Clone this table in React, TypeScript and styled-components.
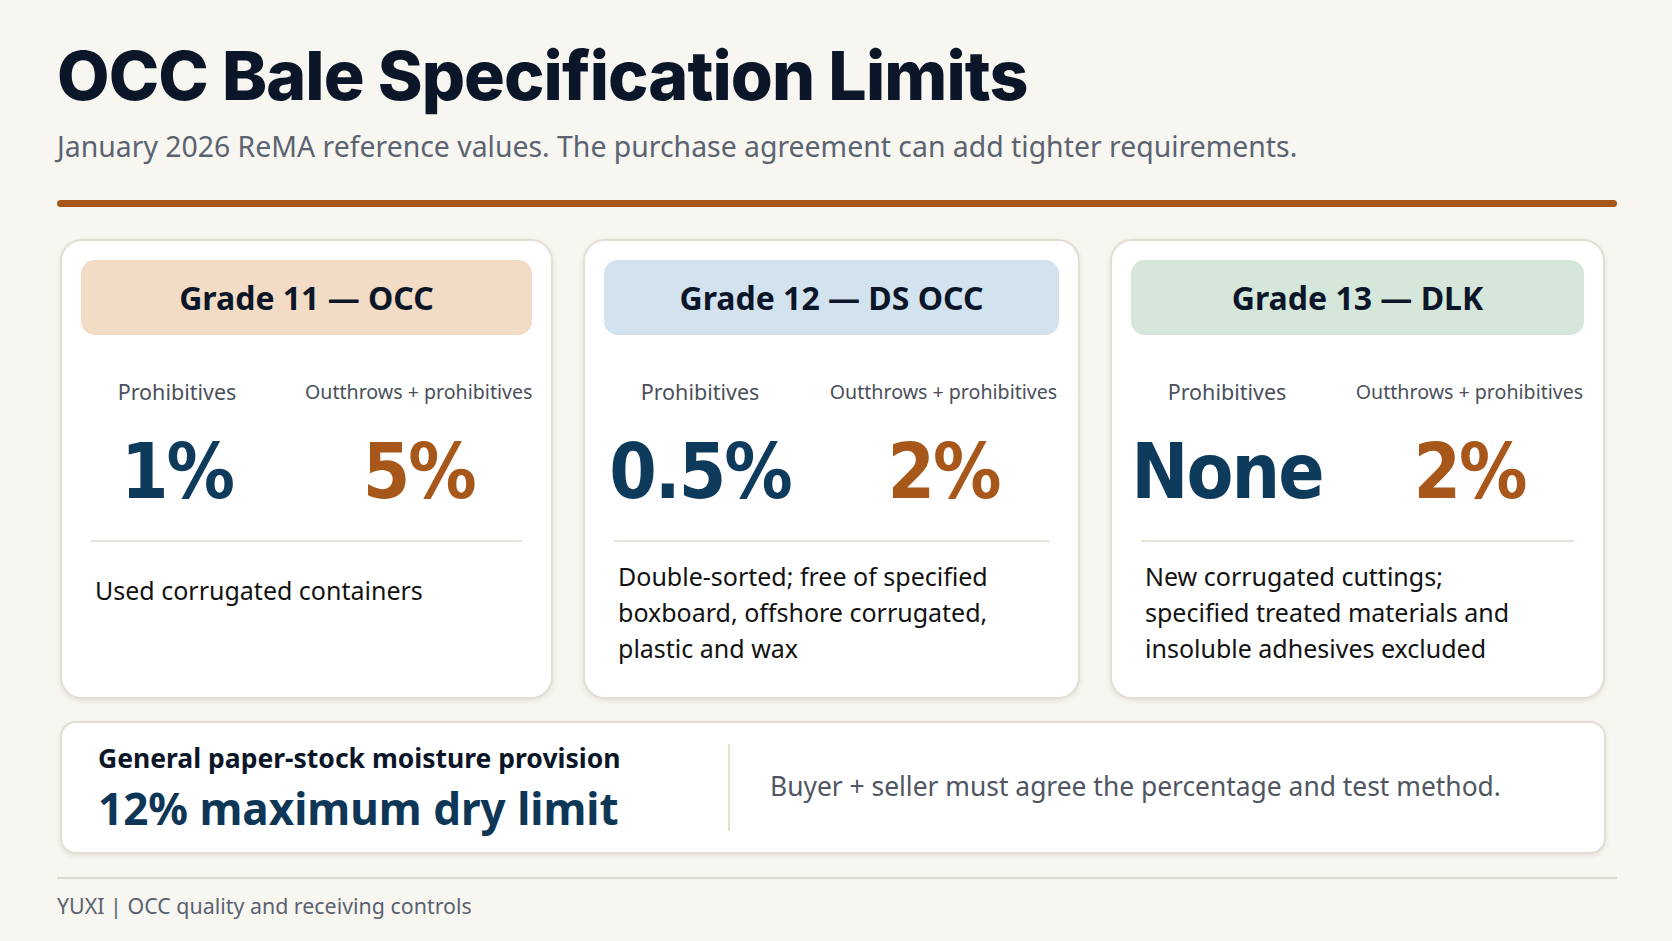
import React from "react";
import styled, { createGlobalStyle } from "styled-components";

const Global = createGlobalStyle`
  html, body { margin: 0; padding: 0; }
  body {
    background: #f8f6f1;
    font-family: "Noto Sans", "Open Sans", sans-serif;
    color: #111827;
  }
`;

const Page = styled.div`
  width: 1672px;
  height: 941px;
  box-sizing: border-box;
  padding: 34px 55px 0 57px;
  display: flex;
  flex-direction: column;
`;

const Title = styled.h1`
  margin: 0;
  font-family: Inter, "Noto Sans", sans-serif;
  font-weight: 800;
  font-size: 68px;
  line-height: 82px;
  letter-spacing: -0.9px;
  color: #0b1628;
`;

const Subtitle = styled.p`
  margin: 12px 0 0;
  font-family: "Noto Sans", sans-serif;
  font-size: 28.4px;
  line-height: 36px;
  color: #5b6370;
`;

const Rule = styled.div`
  height: 7px;
  border-radius: 4px;
  background: #a8571a;
  margin-top: 36px;
`;

const Grid = styled.div`
  display: grid;
  grid-template-columns: 493px 497px 495px;
  column-gap: 30px;
  margin: 32px 12px 0 3px;
`;

const Card = styled.div`
  background: #ffffff;
  border: 2px solid #e4ddd2;
  border-radius: 22px;
  box-shadow: 0 2px 5px rgba(60, 45, 25, 0.1);
  height: 460px;
  box-sizing: border-box;
  padding: 19px 19px 0;
  display: flex;
  flex-direction: column;
`;

const Pill = styled.div<{ $bg: string }>`
  height: 75px;
  border-radius: 14px;
  background: ${(p) => p.$bg};
  display: flex;
  align-items: center;
  justify-content: center;
  font-family: "Noto Sans", sans-serif;
  font-weight: 700;
  font-size: 32px;
  color: #0b1628;
`;

const Stats = styled.div`
  display: grid;
  grid-template-columns: 192px 1fr;
  column-gap: 32px;
  margin-top: 43px;
`;

const Stat = styled.div`
  display: flex;
  flex-direction: column;
  align-items: center;
`;

const Label = styled.div<{ $size: number }>`
  font-family: "Noto Sans", sans-serif;
  font-size: ${(p) => p.$size}px;
  line-height: 28px;
  color: #4a505a;
  white-space: nowrap;
`;

const Value = styled.div<{ $accent?: boolean }>`
  margin-top: 26px;
  font-family: "DejaVu Sans Condensed", "DejaVu Sans", sans-serif;
  font-weight: 700;
  font-size: 76px;
  line-height: 80px;
  letter-spacing: -2px;
  color: ${(p) => (p.$accent ? "#a8571a" : "#0e3a5c")};
  white-space: nowrap;
`;

const Divider = styled.div`
  height: 2px;
  background: #e8e2d9;
  margin: 28px 10px 0;
`;

const Desc = styled.p<{ $top: number }>`
  margin: ${(p) => p.$top}px 0 0;
  padding: 0 14px;
  font-family: "Noto Sans", sans-serif;
  font-size: 25px;
  line-height: 36px;
  color: #121212;
`;

const Bottom = styled.div`
  margin: 22px 11px 0 3px;
  height: 133px;
  box-sizing: border-box;
  background: #ffffff;
  border: 2px solid #e4ddd2;
  border-radius: 16px;
  box-shadow: 0 2px 5px rgba(60, 45, 25, 0.1);
  display: flex;
  align-items: center;
`;

const BottomLeft = styled.div`
  width: 666px;
  box-sizing: border-box;
  padding-left: 36px;
  display: flex;
  flex-direction: column;
  gap: 8px;
`;

const Kicker = styled.div`
  font-family: "Noto Sans", sans-serif;
  font-weight: 700;
  font-size: 26.5px;
  line-height: 32px;
  color: #0b1628;
`;

const Big = styled.div`
  font-family: "Noto Sans", sans-serif;
  font-weight: 700;
  font-size: 44px;
  line-height: 52px;
  color: #0e3656;
`;

const VLine = styled.div`
  width: 2px;
  height: 87px;
  background: #e4ddd2;
`;

const BottomRight = styled.div`
  padding-left: 40px;
  font-family: "Noto Sans", sans-serif;
  font-size: 26.4px;
  color: #4f5662;
  margin-top: -4px;
`;

const FootLine = styled.div`
  height: 2px;
  background: #ddd8d0;
  margin-top: 23px;
`;

const Footer = styled.div`
  margin-top: 13px;
  font-family: "Noto Sans", sans-serif;
  font-size: 21.4px;
  line-height: 28px;
  color: #5b6370;
`;

const cards = [
  {
    title: "Grade 11 — OCC",
    bg: "#f3dcc5",
    a: "1%",
    b: "5%",
    desc: ["Used corrugated containers"],
    top: 30,
  },
  {
    title: "Grade 12 — DS OCC",
    bg: "#d3e2ef",
    a: "0.5%",
    b: "2%",
    desc: ["Double-sorted; free of specified", "boxboard, offshore corrugated,", "plastic and wax"],
    top: 16,
  },
  {
    title: "Grade 13 — DLK",
    bg: "#d5e6da",
    a: "None",
    b: "2%",
    desc: ["New corrugated cuttings;", "specified treated materials and", "insoluble adhesives excluded"],
    top: 16,
  },
];

export default function App() {
  return (
    <>
      <Global />
      <Page>
        <Title>OCC Bale Specification Limits</Title>
        <Subtitle>
          January 2026 ReMA reference values. The purchase agreement can add tighter requirements.
        </Subtitle>
        <Rule />
        <Grid>
          {cards.map((c) => (
            <Card key={c.title}>
              <Pill $bg={c.bg}>{c.title}</Pill>
              <Stats>
                <Stat>
                  <Label $size={21.5}>Prohibitives</Label>
                  <Value>{c.a}</Value>
                </Stat>
                <Stat>
                  <Label $size={19.6}>Outthrows + prohibitives</Label>
                  <Value $accent>{c.b}</Value>
                </Stat>
              </Stats>
              <Divider />
              <Desc $top={c.top}>
                {c.desc.map((line, i) => (
                  <React.Fragment key={i}>
                    {i > 0 && <br />}
                    {line}
                  </React.Fragment>
                ))}
              </Desc>
            </Card>
          ))}
        </Grid>
        <Bottom>
          <BottomLeft>
            <Kicker>General paper-stock moisture provision</Kicker>
            <Big>12% maximum dry limit</Big>
          </BottomLeft>
          <VLine />
          <BottomRight>Buyer + seller must agree the percentage and test method.</BottomRight>
        </Bottom>
        <FootLine />
        <Footer>YUXI | OCC quality and receiving controls</Footer>
      </Page>
    </>
  );
}
